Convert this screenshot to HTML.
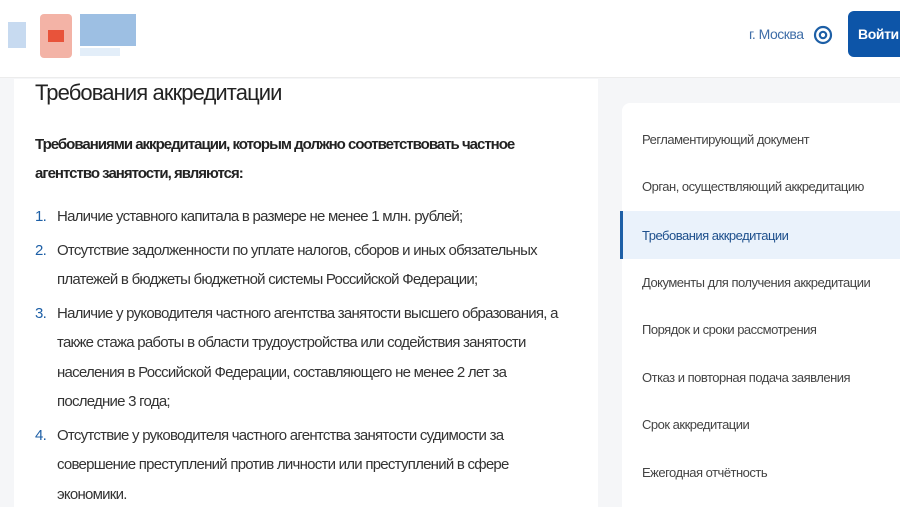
<!DOCTYPE html>
<html><head><meta charset="utf-8"><style>
*{margin:0;padding:0;box-sizing:border-box}
html{width:900px;height:507px;overflow:hidden}
body{width:900px;height:507px;overflow:hidden;background:#f5f6f8;font-family:"Liberation Sans",sans-serif;position:relative}
.hdr{position:absolute;left:0;top:0;width:900px;height:78px;background:#fff;border-bottom:1px solid #ececec}
.px{position:absolute}
.main{position:absolute;left:14px;top:79px;width:584px;height:428px;background:#fff}
.side{position:absolute;left:622px;top:103px;width:290px;height:404px;background:#fff;border-radius:8px 0 0 0}
h1{position:absolute;left:35px;top:80px;font-size:22px;font-weight:normal;color:#222;letter-spacing:-0.9px}
.intro{position:absolute;left:35px;top:130px;font-size:15px;font-weight:bold;color:#222;line-height:29px;letter-spacing:-1px;width:520px}
ol{position:absolute;left:35px;top:202px;list-style:none;width:530px}
li{position:relative;padding-left:22px;font-size:15px;line-height:29.5px;color:#333;letter-spacing:-0.75px;margin-bottom:4px}
li b{position:absolute;left:0;top:0;color:#1d5fa6;font-weight:normal}
.it{position:absolute;left:642px;font-size:13px;color:#444;letter-spacing:-0.5px}
.act{position:absolute;left:620px;top:211px;width:280px;height:48px;background:#eaf2fb;border-left:3px solid #1d5fa6}
</style></head><body>
<div class="hdr">
 <div class="px" style="left:8px;top:22px;width:18px;height:26px;background:#c7daf0"></div>
 <div class="px" style="left:40px;top:14px;width:32px;height:44px;background:#f0a090;border-radius:4px;opacity:.8"></div>
 <div class="px" style="left:48px;top:30px;width:16px;height:12px;background:#e8533a"></div>
 <div class="px" style="left:80px;top:14px;width:56px;height:32px;background:#9dbfe3"></div>
 <div class="px" style="left:80px;top:48px;width:40px;height:8px;background:#e3eef9"></div>
 <div class="px" style="left:749px;top:26px;font-size:14px;color:#3f6ea8;letter-spacing:-0.5px">г. Москва</div>
 <svg class="px" style="left:813px;top:25px" width="20" height="20" viewBox="0 0 20 20"><circle cx="10" cy="10" r="8" fill="none" stroke="#1d5fa6" stroke-width="2.2"/><circle cx="10" cy="10" r="3.2" fill="none" stroke="#1d5fa6" stroke-width="2.2"/></svg>
 <div class="px" style="left:848px;top:11px;width:70px;height:46px;background:#0d55a8;border-radius:6px;color:#fff;font-size:14px;font-weight:bold;line-height:46px;padding-left:10px;letter-spacing:-0.4px">Войти</div>
</div>
<div class="main"></div>
<div class="side"></div>
<div class="act"></div>
<h1>Требования аккредитации</h1>
<div class="intro">Требованиями аккредитации, которым должно соответствовать частное агентство занятости, являются:</div>
<ol>
<li><b>1.</b>Наличие уставного капитала в размере не менее 1 млн. рублей;</li>
<li><b>2.</b>Отсутствие задолженности по уплате налогов, сборов и иных обязательных платежей в бюджеты бюджетной системы Российской Федерации;</li>
<li><b>3.</b>Наличие у руководителя частного агентства занятости высшего образования, а также стажа работы в области трудоустройства или содействия занятости населения в Российской Федерации, составляющего не менее 2 лет за последние 3 года;</li>
<li><b>4.</b>Отсутствие у руководителя частного агентства занятости судимости за совершение преступлений против личности или преступлений в сфере экономики.</li>
</ol>
<div class="it" style="top:132px">Регламентирующий документ</div>
<div class="it" style="top:179px">Орган, осуществляющий аккредитацию</div>
<div class="it" style="top:228px;color:#1d4f8c">Требования аккредитации</div>
<div class="it" style="top:275px">Документы для получения аккредитации</div>
<div class="it" style="top:322px">Порядок и сроки рассмотрения</div>
<div class="it" style="top:370px">Отказ и повторная подача заявления</div>
<div class="it" style="top:417px">Срок аккредитации</div>
<div class="it" style="top:465px">Ежегодная отчётность</div>
</body></html>
